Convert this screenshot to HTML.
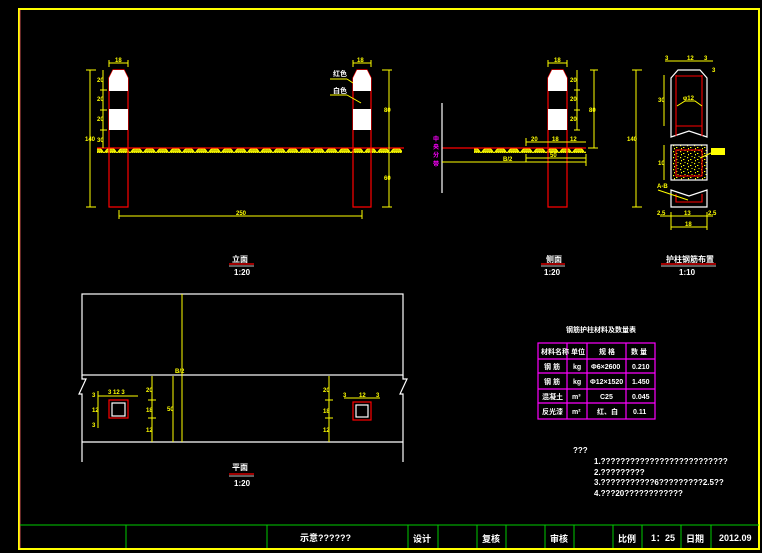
<!DOCTYPE html>
<html><head><meta charset="utf-8"><style>
html,body{margin:0;padding:0;background:#000;width:762px;height:553px;overflow:hidden}
svg{display:block}
text{font-family:"Liberation Sans","Noto Sans CJK SC",sans-serif;font-weight:bold}
.y{fill:#ff0}.w{fill:#fff}.m{fill:#f0f}
</style></head><body>
<svg width="762" height="553" viewBox="0 0 762 553" xmlns="http://www.w3.org/2000/svg">
<defs>
<pattern id="wave" x="0" y="146" width="13" height="8" patternUnits="userSpaceOnUse">
<path d="M1 6 Q4 1 7 3 Q9 1 12 6 Z" stroke="#ff0" stroke-width="1.2" fill="#cc0"/>
<path d="M0 6.5 H13" stroke="#ee0" stroke-width="1" stroke-dasharray="1 1"/>
</pattern>
<pattern id="dots" width="7" height="6" patternUnits="userSpaceOnUse">
<rect x="1" y="1" width="1.2" height="1.2" fill="#ff0"/><rect x="4" y="3" width="1.4" height="1" fill="#ff0"/><rect x="2" y="4" width="1" height="1.3" fill="#ff0"/><rect x="5.5" y="0" width="1" height="1" fill="#ff0"/>
</pattern>
</defs>
<rect x="19" y="9" width="740" height="540" fill="none" stroke="#ff0" stroke-width="2"/>
<line x1="20" y1="10" x2="20" y2="548" stroke="#f66" stroke-width="0.8"/>
<g stroke="#0c0" stroke-width="1" fill="none">
<line x1="20" y1="525" x2="759" y2="525"/>
<line x1="126" y1="525" x2="126" y2="548"/><line x1="267" y1="525" x2="267" y2="548"/><line x1="408" y1="525" x2="408" y2="548"/><line x1="438" y1="525" x2="438" y2="548"/><line x1="477" y1="525" x2="477" y2="548"/><line x1="506" y1="525" x2="506" y2="548"/><line x1="545" y1="525" x2="545" y2="548"/><line x1="574" y1="525" x2="574" y2="548"/><line x1="613" y1="525" x2="613" y2="548"/><line x1="642" y1="525" x2="642" y2="548"/><line x1="681" y1="525" x2="681" y2="548"/><line x1="711" y1="525" x2="711" y2="548"/>
</g>
<g class="w" font-size="9">
<text x="300" y="541">示意??????</text>
<text x="413" y="542">设计</text><text x="482" y="542">复核</text><text x="550" y="542">审核</text><text x="618" y="542">比例</text><text x="651" y="541">1：25</text><text x="686" y="542">日期</text><text x="719" y="541">2012.09</text>
</g>

<g>
<rect x="97" y="146" width="305" height="7" fill="url(#wave)"/>
<path d="M109 207 V78 L113 70 H124 L128 78 V207 Z" fill="none" stroke="#f00" stroke-width="1.2"/>
<path d="M109 91 V78 L113 70 H124 L128 78 V91 Z" fill="#fff"/>
<rect x="109" y="109" width="19" height="21" fill="#fff"/>
<path d="M353 207 V78 L357 70 H367 L371 78 V207 Z" fill="none" stroke="#f00" stroke-width="1.2"/>
<path d="M353 91 V78 L357 70 H367 L371 78 V91 Z" fill="#fff"/>
<rect x="353" y="109" width="18" height="21" fill="#fff"/>
<line x1="97" y1="148" x2="404" y2="148" stroke="#f00" stroke-width="1.2"/>
<g stroke="#ff0" stroke-width="1" fill="none">
<line x1="90" y1="70" x2="90" y2="207"/><line x1="86" y1="70" x2="96" y2="70"/><line x1="86" y1="207" x2="96" y2="207"/>
<line x1="103" y1="70" x2="103" y2="148"/><line x1="100" y1="90" x2="107" y2="90"/><line x1="100" y1="110" x2="107" y2="110"/><line x1="100" y1="130" x2="107" y2="130"/>
<line x1="109" y1="63" x2="128" y2="63"/><line x1="109" y1="60" x2="109" y2="67"/><line x1="128" y1="60" x2="128" y2="67"/>
<line x1="353" y1="63" x2="371" y2="63"/><line x1="353" y1="60" x2="353" y2="67"/><line x1="371" y1="60" x2="371" y2="67"/>
<line x1="389" y1="70" x2="389" y2="207"/><line x1="382" y1="70" x2="392" y2="70"/><line x1="382" y1="207" x2="392" y2="207"/>
<line x1="119" y1="216" x2="362" y2="216"/><line x1="119" y1="210" x2="119" y2="219"/><line x1="362" y1="210" x2="362" y2="219"/>
<line x1="330" y1="79" x2="347" y2="79"/><line x1="347" y1="79" x2="353" y2="83"/>
<line x1="330" y1="95" x2="347" y2="95"/><line x1="347" y1="95" x2="361" y2="103"/>
</g>
<g class="y" font-size="6">
<text x="115" y="62">18</text><text x="357" y="62">18</text>
<text x="97" y="82">20</text><text x="97" y="101">20</text><text x="97" y="121">20</text><text x="97" y="142">30</text>
<text x="85" y="141">140</text><text x="384" y="112">80</text><text x="384" y="180">60</text>
<text x="236" y="215">250</text>
</g>
<g class="w" font-size="7"><text x="333" y="76">红色</text><text x="333" y="93">白色</text></g>
<text x="232" y="262" class="w" font-size="8">立面</text>
<line x1="229" y1="264" x2="254" y2="264" stroke="#f00" stroke-width="1.3"/><line x1="229" y1="266" x2="254" y2="266" stroke="#fff" stroke-width="0.8"/>
<text x="234" y="275" class="w" font-size="8">1:20</text>
</g>

<g>
<rect x="474" y="146" width="112" height="7" fill="url(#wave)"/>
<path d="M548 207 V78 L552 70 H563 L567 78 V207 Z" fill="none" stroke="#f00" stroke-width="1.2"/>
<path d="M548 91 V78 L552 70 H563 L567 78 V91 Z" fill="#fff"/>
<rect x="548" y="109" width="19" height="21" fill="#fff"/>
<line x1="442" y1="148" x2="586" y2="148" stroke="#f00" stroke-width="1.2"/>
<line x1="442" y1="103" x2="442" y2="193" stroke="#fff" stroke-width="1.2"/>
<g stroke="#ff0" stroke-width="1" fill="none">
<line x1="442" y1="162" x2="586" y2="162"/><line x1="586" y1="154" x2="586" y2="166"/>
<line x1="526" y1="142" x2="586" y2="142"/><line x1="526" y1="138" x2="526" y2="146"/>
<line x1="526" y1="158" x2="586" y2="158"/><line x1="526" y1="154" x2="526" y2="162"/>
<line x1="548" y1="63" x2="567" y2="63"/><line x1="548" y1="60" x2="548" y2="67"/><line x1="567" y1="60" x2="567" y2="67"/>
<line x1="577" y1="70" x2="577" y2="130"/><line x1="574" y1="90" x2="580" y2="90"/><line x1="574" y1="110" x2="580" y2="110"/><line x1="574" y1="130" x2="580" y2="130"/>
<line x1="594" y1="70" x2="594" y2="148"/><line x1="590" y1="70" x2="598" y2="70"/><line x1="588" y1="148" x2="598" y2="148"/>
</g>
<g class="y" font-size="6">
<text x="554" y="62">18</text><text x="570" y="82">20</text><text x="570" y="101">20</text><text x="570" y="121">20</text><text x="589" y="112">80</text>
<text x="531" y="141">20</text><text x="552" y="141">18</text><text x="570" y="141">12</text><text x="550" y="157">50</text><text x="503" y="161">B/2</text>
</g>
<g class="m" font-size="6"><text x="433" y="141">中</text><text x="433" y="149">央</text><text x="433" y="157">分</text><text x="433" y="166">带</text></g>
<text x="546" y="262" class="w" font-size="8">侧面</text>
<line x1="541" y1="264" x2="565" y2="264" stroke="#f00" stroke-width="1.3"/><line x1="541" y1="266" x2="565" y2="266" stroke="#fff" stroke-width="0.8"/>
<text x="544" y="275" class="w" font-size="8">1:20</text>
</g>

<g>
<path d="M671 137 V78 L678 70 H700 L707 78 V137 L689 131 Z" fill="none" stroke="#fff" stroke-width="1.2"/>
<g stroke="#f00" stroke-width="1.1" fill="none">
<line x1="676" y1="75" x2="676" y2="136"/><line x1="702" y1="75" x2="702" y2="136"/>
<line x1="676" y1="76" x2="702" y2="76"/><line x1="676" y1="126" x2="702" y2="126"/>
</g>
<path d="M677 106 L685 101 H695 L702 106" stroke="#ff0" fill="none"/>
<text x="683" y="100" class="y" font-size="6">φ12</text>
<rect x="671" y="145" width="36" height="35" fill="url(#dots)" stroke="#fff" stroke-width="1.2"/>
<rect x="676" y="150" width="26" height="26" fill="none" stroke="#f00" stroke-width="1.1"/>
<rect x="711" y="148" width="14" height="7" fill="#ff0"/><line x1="700" y1="158" x2="711" y2="153" stroke="#ff0"/>
<path d="M671 190 L689 196 L707 190 V207 H671 Z" fill="none" stroke="#fff" stroke-width="1.2"/>
<path d="M676 194 V202 H702 V194" fill="none" stroke="#f00" stroke-width="1.1"/>
<line x1="658" y1="190" x2="688" y2="200" stroke="#ff0"/>
<g stroke="#ff0" stroke-width="1" fill="none">
<line x1="636" y1="70" x2="636" y2="207"/><line x1="632" y1="70" x2="642" y2="70"/><line x1="632" y1="207" x2="642" y2="207"/>
<line x1="664" y1="75" x2="664" y2="126"/><line x1="664" y1="145" x2="664" y2="180"/>
<line x1="665" y1="61" x2="713" y2="61"/>
<line x1="660" y1="216" x2="713" y2="216"/><line x1="671" y1="212" x2="671" y2="230"/><line x1="707" y1="212" x2="707" y2="230"/>
<line x1="671" y1="227" x2="707" y2="227"/>
</g>
<g class="y" font-size="6">
<text x="687" y="60">12</text><text x="665" y="60">3</text><text x="704" y="60">3</text><text x="712" y="72">3</text>
<text x="627" y="141">140</text><text x="658" y="102">30</text><text x="658" y="165">10</text>
<text x="657" y="215">2.5</text><text x="684" y="215">13</text><text x="708" y="215">2.5</text><text x="685" y="226">18</text><text x="657" y="188">A-B</text>
</g>
<text x="666" y="262" class="w" font-size="8">护柱钢筋布置</text>
<line x1="661" y1="264" x2="716" y2="264" stroke="#f00" stroke-width="1.3"/><line x1="661" y1="266" x2="716" y2="266" stroke="#fff" stroke-width="0.8"/>
<text x="679" y="275" class="w" font-size="8">1:10</text>
</g>

<g>
<g stroke="#fff" stroke-width="1.2" fill="none">
<rect x="82" y="294" width="321" height="81"/>
<line x1="82" y1="442" x2="403" y2="442"/>
<path d="M82 375 V379 H86 L79 394 H82 V462"/>
<path d="M403 375 V379 H407 L400 394 H403 V462"/>
<rect x="112" y="403" width="13" height="13"/>
<rect x="356" y="405" width="12" height="12"/>
</g>
<rect x="109" y="400" width="19" height="18" fill="none" stroke="#f00" stroke-width="1.2"/>
<rect x="353" y="402" width="18" height="18" fill="none" stroke="#f00" stroke-width="1.2"/>
<g stroke="#ff0" stroke-width="1" fill="none">
<line x1="182" y1="294" x2="182" y2="442"/><line x1="173" y1="376" x2="173" y2="442"/>
<line x1="152" y1="376" x2="152" y2="442"/><line x1="148" y1="400" x2="156" y2="400"/><line x1="148" y1="418" x2="156" y2="418"/>
<line x1="329" y1="376" x2="329" y2="442"/><line x1="325" y1="400" x2="333" y2="400"/><line x1="325" y1="418" x2="333" y2="418"/>
<line x1="98" y1="396" x2="138" y2="396"/><line x1="98" y1="391" x2="98" y2="400"/>
<line x1="98" y1="398" x2="98" y2="428"/>
<line x1="344" y1="398" x2="380" y2="398"/>
</g>
<g class="y" font-size="6">
<text x="175" y="373">B/2</text><text x="167" y="411">50</text><text x="146" y="392">20</text><text x="146" y="412">18</text><text x="146" y="432">12</text>
<text x="323" y="392">20</text><text x="323" y="413">18</text><text x="323" y="432">12</text>
<text x="108" y="394">3 12 3</text><text x="343" y="397">3</text><text x="359" y="397">12</text><text x="376" y="397">3</text>
<text x="92" y="397">3</text><text x="92" y="412">12</text><text x="92" y="427">3</text>
</g>
<text x="232" y="470" class="w" font-size="8">平面</text>
<line x1="229" y1="474" x2="254" y2="474" stroke="#f00" stroke-width="1.3"/><line x1="229" y1="476" x2="254" y2="476" stroke="#fff" stroke-width="0.8"/>
<text x="234" y="486" class="w" font-size="8">1:20</text>
</g>

<text x="566" y="332" class="w" font-size="7">钢筋护柱材料及数量表</text>
<g stroke="#f0f" stroke-width="1.2" fill="none">
<rect x="538" y="343" width="117" height="76"/>
<line x1="538" y1="359" x2="655" y2="359"/><line x1="538" y1="373" x2="655" y2="373"/><line x1="538" y1="389" x2="655" y2="389"/><line x1="538" y1="403" x2="655" y2="403"/>
<line x1="567" y1="343" x2="567" y2="419"/><line x1="587" y1="343" x2="587" y2="419"/><line x1="626" y1="343" x2="626" y2="419"/>
</g>
<g class="w" font-size="7">
<text x="541" y="354">材料名称</text><text x="571" y="354">单位</text><text x="599" y="354">规 格</text><text x="631" y="354">数 量</text>
<text x="544" y="369">钢 筋</text><text x="573" y="369">kg</text><text x="591" y="369">Φ6×2600</text><text x="632" y="369">0.210</text>
<text x="544" y="384">钢 筋</text><text x="573" y="384">kg</text><text x="590" y="384">Φ12×1520</text><text x="632" y="384">1.450</text>
<text x="542" y="399">混凝土</text><text x="572" y="399">m³</text><text x="600" y="399">C25</text><text x="632" y="399">0.045</text>
<text x="542" y="414">反光漆</text><text x="572" y="414">m²</text><text x="597" y="414">红、白</text><text x="633" y="414">0.11</text>
</g>
<g class="w" font-size="8">
<text x="573" y="453">???</text>
<text x="594" y="464">1.??????????????????????????</text>
<text x="594" y="475">2.?????????</text>
<text x="594" y="485">3.???????????6?????????2.5??</text>
<text x="594" y="496">4.???20????????????</text>
</g>
</svg>
</body></html>
